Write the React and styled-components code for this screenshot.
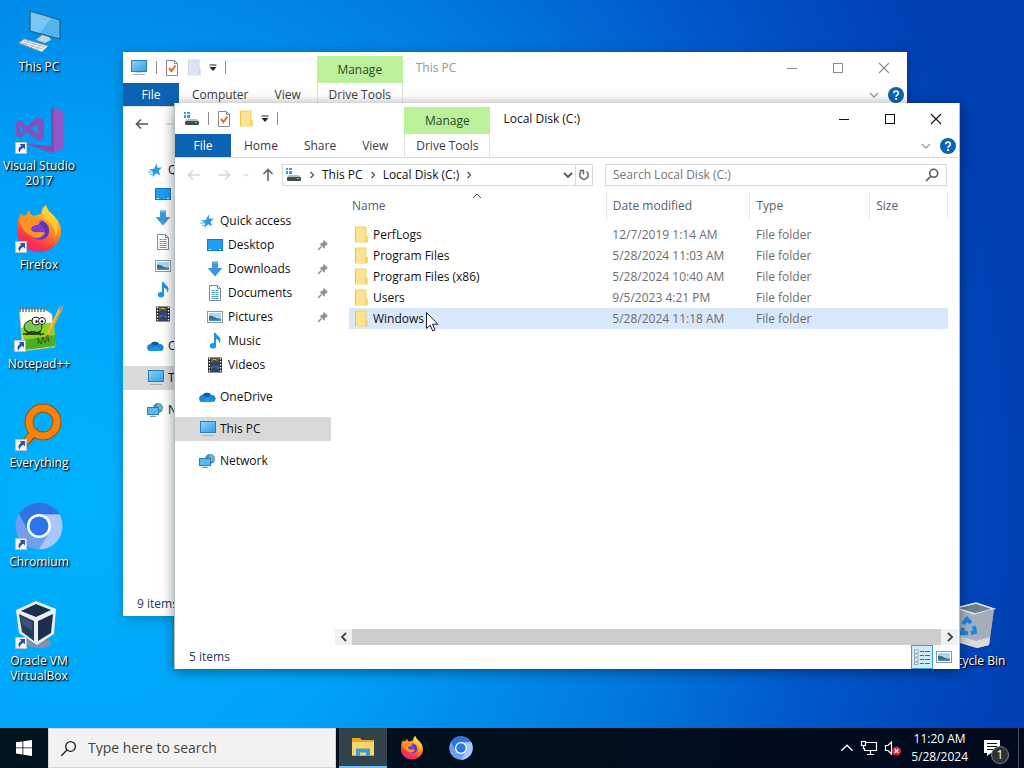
import styled, { createGlobalStyle, css } from "styled-components";

const GlobalStyle = createGlobalStyle`
    * {
        box-sizing: border-box;
    }

    body {
        margin: 0;
        overflow: hidden;
        font-family: "Open Sans", "Noto Sans", "Liberation Sans", sans-serif;
        font-size: 12px;
        line-height: 16px;
    }

    button, input {
        font: inherit;
        color: inherit;
        border: 0;
        padding: 0;
        background: none;
        border-radius: 0;
    }

    svg {
        display: block;
        flex: none;
    }
`;

/* ---------- icons ---------- */

const MonitorIcon = ({ size = 18 }) => (
    <svg width={size} height={size} viewBox="0 0 18 18">
        <defs>
            <linearGradient id="screen" x1="0" y1="0" x2="1" y2="1">
                <stop offset="0" stopColor="#8fd3fb" />
                <stop offset="1" stopColor="#2f9fe8" />
            </linearGradient>
        </defs>
        <rect x="1.5" y="1.5" width="15" height="11" fill="url(#screen)" stroke="#2f7fb5" />
        <path d="M3 15.500h12" stroke="#9fb0ba" strokeWidth="1" />
        <path d="M6 13.500h6" stroke="#cfd8dd" />
    </svg>
);

const DriveIcon = () => (
    <svg width="18" height="16" viewBox="0 0 18 16">
        <path d="M2 1h2v2H2zM5 1h3v2H5zM2 4h2v3H2zM5 4h3v3H5z" fill="#27a5e8" />
        <path d="M5 8h10l2 3H3z" fill="#b6bec1" />
        <rect x="3" y="10" width="14" height="4" rx="1" fill="#3e4f50" />
        <rect x="13" y="11" width="2" height="1" fill="#5ee08a" />
    </svg>
);

const CheckPageIcon = () => (
    <svg width="14" height="16" viewBox="0 0 14 16">
        <path d="M1.500 0.500h8l3 3v12h-11z" fill="#fff" stroke="#8a8a8a" />
        <path d="M9.500 0.500v3h3" fill="none" stroke="#8a8a8a" />
        <path d="M4 8l2.500 3L10.500 5.500" fill="none" stroke="#dd6b3f" strokeWidth="2" />
    </svg>
);

const FolderIcon = ({ faded }) => (
    <svg width="14" height="17" viewBox="0 0 14 17">
        <path d="M1 0.500h11.500v9l1 .5v6.500H1z" fill={faded ? "#d3daf0" : "#f0cf68"} />
        <path d="M2 1.500h9.500V16H2z" fill={faded ? "#dde4f6" : "#fae491"} />
        <path d="M11 10.500h2.500v5.500H11z" fill={faded ? "#cfd6ec" : "#f3d468"} />
        <path d="M1.500 1v15" stroke={faded ? "#cdd5ea" : "#e8c252"} />
    </svg>
);

const DropCaret = () => (
    <svg width="8" height="8" viewBox="0 0 8 8">
        <path d="M0.500 1h7" stroke="#222" strokeWidth="1" />
        <path d="M0.500 3h7L4 7z" fill="#222" />
    </svg>
);

const Chevron = ({ dir = "down", size = 10, color = "#555", weight = 1.3 }) => {
    const paths = {
        down: "M1 3l4 4 4-4",
        up: "M1 7l4-4 4 4",
        right: "M3.500 2l3 3-3 3",
        left: "M7 1L3 5l4 4",
    };
    return (
        <svg width={size} height={size} viewBox="0 0 10 10">
            <path d={paths[dir]} fill="none" stroke={color} strokeWidth={weight} />
        </svg>
    );
};

const Arrow = ({ angle = 0, color = "#555" }) => (
    <svg width="14" height="14" viewBox="0 0 14 14">
        <g transform={`rotate(${angle} 7 7)`} fill="none" stroke={color} strokeWidth="1.600">
            <path d="M1.500 7h11.500M6 2.500L1.500 7 6 11.500" />
        </g>
    </svg>
);

const RefreshIcon = () => (
    <svg width="14" height="14" viewBox="0 0 14 14">
        <path d="M9.500 3.500a4.300 4.300 0 1 1-5 0" fill="none" stroke="#666" strokeWidth="1.500" />
        <path d="M2.500 2.500h4v4" fill="none" stroke="#666" strokeWidth="1.400" />
    </svg>
);

const Magnifier = ({ size = 14, color = "#555", weight = 1.6 }) => (
    <svg width={size} height={size} viewBox="0 0 14 14">
        <circle cx="8.700" cy="5.300" r="4" fill="none" stroke={color} strokeWidth={weight} />
        <path d="M5.800 8.200L1 13" stroke={color} strokeWidth={weight} />
    </svg>
);

const HelpIcon = () => (
    <svg width="16" height="16" viewBox="0 0 16 16">
        <circle cx="8" cy="8" r="8" fill="#0c64b4" />
        <path d="M5.700 6.200a2.300 2.200 0 1 1 3.500 1.900c-.8.500-1.200.8-1.200 1.700" fill="none" stroke="#fff" strokeWidth="1.700" />
        <rect x="7.100" y="11" width="1.900" height="1.900" fill="#fff" />
    </svg>
);

const StarIcon = () => (
    <svg width="16" height="16" viewBox="0 0 16 16">
        <path d="M9.500 1.500l1 4.300 4.500-.3-3.400 3.300 1.600 4.700-4-2.200L5.500 15l.3-4.800L3 7.500l4-.7z" fill="#2a9be6" />
        <path d="M2 7.500h4M1 10h4M3 12.500h2" stroke="#56b2ee" />
    </svg>
);

const DesktopIcon = () => (
    <svg width="16" height="16" viewBox="0 0 16 16">
        <rect x="0.500" y="2.500" width="15" height="11" fill="#1e9df5" stroke="#1579c8" />
        <path d="M2 12.500h2M12 12.500h2" stroke="#d5efff" />
    </svg>
);

const DownloadIcon = () => (
    <svg width="16" height="16" viewBox="0 0 16 16">
        <path d="M5 0.500h6V7h4.500L8 15.500.500 7H5z" fill="#3c97dc" />
        <path d="M5.500 1h5v1.500h-5z" fill="#70b8ea" />
    </svg>
);

const DocumentIcon = () => (
    <svg width="16" height="16" viewBox="0 0 16 16">
        <path d="M2.500 0.500h8l3 3v12h-11z" fill="#fff" stroke="#7e8a92" />
        <path d="M10.500 0.500v3h3" fill="none" stroke="#7e8a92" />
        <path d="M4.500 5.500h3M8.500 5.500h3M4.500 7.500h7M4.500 9.500h3M8.500 9.500h3M4.500 11.500h7M4.500 13.500h7" stroke="#4f9fc4" />
    </svg>
);

const PictureIcon = () => (
    <svg width="16" height="16" viewBox="0 0 16 16">
        <rect x="0.500" y="2.500" width="15" height="11" fill="#fff" stroke="#8a9aa5" />
        <rect x="2" y="4" width="12" height="8" fill="#a8d8f5" />
        <path d="M2 7c3-1 5 1 7 2l5 1v2H2z" fill="#3a6f82" />
        <path d="M2 10.500h12V12H2z" fill="#4b8fc0" />
    </svg>
);

const MusicIcon = () => (
    <svg width="16" height="16" viewBox="0 0 16 16">
        <path d="M7 0h2c.3 2.500 4.500 3.500 4.500 7 0 1.500-.6 2.700-1.500 3.500.5-2.700-1-4-3-4.700V13H7z" fill="#1d96e8" />
        <ellipse cx="6" cy="12.800" rx="3.200" ry="2.700" fill="#1d96e8" />
    </svg>
);

const VideoIcon = () => (
    <svg width="16" height="16" viewBox="0 0 16 16">
        <rect x="1" y="0.500" width="14" height="15" fill="#26272b" />
        <path d="M2.500 1v14M13.500 1v14" stroke="#fff" strokeWidth="1.400" strokeDasharray="1.500 1.500" />
        <rect x="4" y="1.500" width="8" height="6" fill="#7c6a35" />
        <rect x="4" y="8.500" width="8" height="6" fill="#3d5fa8" />
        <path d="M4 6l3-3 3 2 2-2v4.500H4zM4 13l4-3 4 3v1.500H4z" fill="#30416c" />
        <path d="M6 2.500h3" stroke="#d9b04c" />
    </svg>
);

const CloudIcon = () => (
    <svg width="17" height="16" viewBox="0 0 17 16">
        <path d="M4 13a3.700 3.500 0 0 1-.3-7A4.800 4.600 0 0 1 12 6a3.700 3.500 0 0 1 1.500 7z" fill="#1a86d9" />
        <path d="M3.700 6A4.800 4.600 0 0 1 12 6c-1.500 0-2.500 1-3 2z" fill="#0a5cb0" />
        <path d="M2 12l7-4 6 4.300c-.5.500-1 .7-1.500.7H4c-.8 0-1.500-.4-2-1z" fill="#1f95e6" />
    </svg>
);

const NetworkIcon = () => (
    <svg width="17" height="16" viewBox="0 0 17 16">
        <circle cx="11" cy="6" r="5" fill="#3f8fae" />
        <path d="M11 1c2 1 4 3 4.700 6L12 9l-2-5z" fill="#6fb7c9" />
        <rect x="0.500" y="5.500" width="11" height="7" fill="#5ab9f0" stroke="#2b7fae" />
        <path d="M3 14.500h6" stroke="#7c98a8" />
        <path d="M6 13v1" stroke="#7c98a8" />
    </svg>
);

const PinIcon = () => (
    <svg width="12" height="12" viewBox="0 0 12 12">
        <path d="M7 1l4 4-1.200.6L8 7.400 7.600 10 2.500 4.800l2.400-.5L6.500 2.300z" fill="#87929b" />
        <path d="M4.500 7.500L1 11" stroke="#87929b" strokeWidth="1.400" />
    </svg>
);

const DetailsIcon = () => (
    <svg width="16" height="16" viewBox="0 0 16 16">
        <g fill="#fff" stroke="#7d9098" strokeWidth=".8">
            <path d="M0.500 1h3.500v3H0.500zM0.500 5h3.500v3H0.500zM0.500 9h3.500v3H0.500zM0.500 13h3.500v2.500H0.500z" />
        </g>
        <path d="M6 2.500h4M11 2.500h5M6 6.500h4M11 6.500h5M6 10.500h4M11 10.500h5M6 14.500h4M11 14.500h5" stroke="#50666f" />
    </svg>
);

const ThisPcLarge = () => (
    <svg width="48" height="48" viewBox="0 0 48 48">
        <path d="M15 4l30 9v19L15 24z" fill="#54b2ec" stroke="#2c5f86" strokeWidth="1.200" />
        <path d="M16 5.500L36 11 25 26l-9-2.500z" fill="#8bd0f7" opacity=".7" />
        <path d="M27 28l7 2 2 3-6 3-9-3z" fill="#c6d4dc" />
        <path d="M9 32l24 7-6 6-23-9z" fill="#e8ecee" stroke="#97a4ab" />
        <path d="M9 34l20 6M7 36l20 6M14 34l-4 4M20 36l-4 4M26 38l-4 4" stroke="#a9b4ba" strokeWidth=".8" />
    </svg>
);

const VisualStudioLarge = () => (
    <svg width="48" height="48" viewBox="0 0 48 48">
        <path d="M36 1l12 4v38l-12 4-24-9 24 2z" fill="#9058c6" />
        <path d="M36 1l3 1v44l-3 1-24-9 24 2z" fill="#7d4cb4" />
        <path fillRule="evenodd" d="M23 11l6 3v18l-6 3-11-9-7 6-4-3V17l4-3 7 6zM23 18l-7 5 7 5zM5 19v8l4-4z" fill="#8350bc" />
    </svg>
);

const FirefoxLogo = ({ size = 48 }) => (
    <svg width={size} height={size} viewBox="0 0 48 48">
        <defs>
            <linearGradient id="fox" x1=".8" y1="0" x2=".3" y2="1">
                <stop offset="0" stopColor="#ffe13a" />
                <stop offset=".45" stopColor="#ff8a1f" />
                <stop offset=".8" stopColor="#f8334a" />
                <stop offset="1" stopColor="#e2258f" />
            </linearGradient>
        </defs>
        <path d="M4 12c2-4 3-4 4-1l2-1c2 0 2-1 4-5 1 4 2 5 5 6 3-1 5-2 7-2 0-4 2-7 5-9 1 5 4 7 8 11 5 5 7 9 7 15 0 12-10 21-22 21S2 38 2 26c0-5 0-9 2-14z" fill="url(#fox)" />
        <circle cx="24" cy="25" r="10" fill="#7b3fd0" />
        <path d="M4 14c4-4 9-3 12 1 3-1 7-1 10 1-1 4-5 4-8 5-3 2-2 5 1 6 4 1 7-1 11 1-3 5-10 7-15 2C9 27 5 21 4 14z" fill="#ff9426" />
        <path d="M24 17c6-1 10 3 10 9 0 6-5 9-10 8 8-1 8-8 4-12z" fill="#5a34b4" />
        <path d="M31 0c1 5 4 7 8 11 5 6 5 15 1 21 1-9-4-14-9-17-5-4-4-11 0-15z" fill="#ffd43a" opacity=".8" />
    </svg>
);

const NotepadLarge = () => (
    <svg width="50" height="48" viewBox="0 0 50 48">
        <path d="M5 5h25l8 5 3 33-32 4z" fill="#fdfdf6" stroke="#a4aaa4" strokeWidth=".8" />
        <path d="M7 24l33-6 1.500 24-30 4z" fill="#8ed422" />
        <path d="M9 36l32-5 .5 11-32 4z" fill="#4cae22" />
        <path d="M6 4v4M9 4v4M12 4v4M15 4v4M18 4v4M21 4v4M24 4v4M27 4v4M30 4v4" stroke="#555" strokeWidth="1.200" />
        <ellipse cx="19" cy="23" rx="9" ry="7" fill="#79c84e" stroke="#243c16" />
        <path d="M12 31c4-5 9-4 15 0M11 26c4 4 10 5 16 1M9 30h21" fill="none" stroke="#1f3612" strokeWidth="1.600" />
        <circle cx="22" cy="17" r="4" fill="#fff" stroke="#222" />
        <circle cx="28" cy="17" r="3.500" fill="#fff" stroke="#222" />
        <circle cx="22.500" cy="17.500" r="1.200" />
        <circle cx="28" cy="17.500" r="1.200" />
        <path d="M24 40v-6l3 6 2-7 2 6 3-6 1 5" fill="none" stroke="#285e17" />
        <path d="M47 4L34 31" stroke="#e3a52e" strokeWidth="3.400" />
        <path d="M46 3L33.500 30" stroke="#f7d467" strokeWidth="1" />
        <path d="M48.500 1.500L46.500 6" stroke="#8793b4" strokeWidth="3.400" />
        <path d="M34 31l-2 4" stroke="#8f5e28" strokeWidth="2" />
    </svg>
);

const EverythingLarge = () => (
    <svg width="48" height="48" viewBox="0 0 48 48">
        <path d="M19 30L9 41" stroke="#8b5314" strokeWidth="8" />
        <circle cx="28" cy="19" r="14" fill="none" stroke="#8b5314" strokeWidth="9" />
        <path d="M19 29L9 41" stroke="#fb8208" strokeWidth="6" />
        <circle cx="28" cy="19" r="14" fill="none" stroke="#fb8208" strokeWidth="7" />
    </svg>
);

const ChromiumLogo = ({ size = 48 }) => (
    <svg width={size} height={size} viewBox="0 0 48 48">
        <circle cx="24" cy="24" r="23.500" fill="#6f9ff2" />
        <path d="M4 12A23.500 23.500 0 0 1 44.500 12.500H24a12 12 0 0 0-10.400 17z" fill="#2f72e2" />
        <path d="M44.500 12.500A23.500 23.500 0 0 1 24 47.500L34.400 30A12 12 0 0 0 24 12.500z" fill="#a9c8fa" />
        <circle cx="24" cy="24" r="12" fill="#fff" />
        <circle cx="24" cy="24" r="9.500" fill="#2a76ea" />
    </svg>
);

const VirtualBoxLarge = () => (
    <svg width="48" height="48" viewBox="0 0 48 48">
        <path d="M11 41c3-4 22-4 25 0 1 4-5 6-12 6s-13-2-13-6z" fill="#7f93aa" />
        <path d="M21 0l20 8-2 25-17 11L4 32 1 9z" fill="#e9eef3" />
        <path d="M21 3l15 6-15 7L6 10z" fill="#1d2f4d" />
        <path d="M4 13l15 7v20L7 31z" fill="#263b5e" />
        <path d="M23 20l15-7-2 19-13 8z" fill="#1d2f4d" />
        <path d="M6 16l11 5v8L8 24z" fill="#3b5279" />
    </svg>
);

const RecycleLarge = () => (
    <svg width="48" height="48" viewBox="0 0 48 48">
        <path d="M6 7l20-5 18 6-5 36-12 3-17-5z" fill="#b5bfc9" opacity=".9" />
        <path d="M6 7l20-5 18 6-19 5z" fill="#6d7f93" stroke="#e9eef2" strokeWidth="1.400" />
        <path d="M25 13l19-5-5 36-12 3z" fill="#a3aeb9" />
        <path d="M11 35l15 5 14-4-1 8-12 3-17-5z" fill="#dddcd6" />
        <g fill="none" stroke="#1f86e4" strokeWidth="4">
            <path d="M13 23l4-5 4 4M24 25l1 6-4 1M18 32h-6l1-5" />
        </g>
    </svg>
);

const ShortcutArrow = () => (
    <svg width="12" height="12" viewBox="0 0 12 12">
        <rect x="0.500" y="0.500" width="11" height="11" fill="#f6f6f6" stroke="#b5c2cc" />
        <path d="M4.500 2H10v5.500L8.300 5.800C6 7 5 8.500 4.800 10.500 2.500 8.500 3.500 5.500 6.300 3.800z" fill="#2c539b" />
    </svg>
);

const WindowsLogo = () => (
    <svg width="16" height="16" viewBox="0 0 16 16">
        <path d="M0 2.300L6.500 1.400v6.100H0zM7.300 1.300L16 0v7.500H7.300zM0 8.300h6.500v6.200L0 13.600zM7.300 8.300H16V16l-8.700-1.300z" fill="#fff" />
    </svg>
);

const TaskbarFolder = () => (
    <svg width="22" height="20" viewBox="0 0 22 20">
        <path d="M0 1h8l2 2h12v16H0z" fill="#e9a823" />
        <path d="M0 5h22v13H0z" fill="#fbd566" />
        <path d="M4 11.500h14V19h-4v-3.500H8V19H4z" fill="#3b9ad9" />
    </svg>
);

const TrayNetwork = () => (
    <svg width="18" height="16" viewBox="0 0 18 16">
        <g fill="none" stroke="#fff" strokeWidth="1.200">
            <path d="M6 2.500h10.500v8H4.500V8" />
            <rect x="1.500" y="1.500" width="4" height="4" />
            <path d="M3.500 6v3M10.500 11v3M7 14.500h7" />
        </g>
    </svg>
);

const TrayVolume = () => (
    <svg width="18" height="16" viewBox="0 0 18 16">
        <path d="M1.500 5.500H4l3.500-3.500v12L4 10.500H1.500z" fill="none" stroke="#fff" strokeWidth="1.200" />
        <circle cx="12.500" cy="11" r="4.500" fill="#d9263c" />
        <path d="M10.700 9.200l3.600 3.600M14.300 9.200l-3.600 3.600" stroke="#fff" strokeWidth="1.300" />
    </svg>
);

const ActionCenterIcon = () => (
    <svg width="16" height="16" viewBox="0 0 16 16">
        <path d="M0 0h16v13H7l-4 3v-3H0z" fill="#fff" />
        <path d="M3 3.500h10M3 6.500h10M3 9.500h7" stroke="#0b1220" />
    </svg>
);

const WindowGlyph = ({ kind, color }) => (
    <svg width="12" height="12" viewBox="0 0 12 12">
        {kind === "min" && <path d="M1 6.500h10" stroke={color} />}
        {kind === "max" && <rect x="1.500" y="1.500" width="9" height="9" fill="none" stroke={color} />}
        {kind === "close" && <path d="M1 1l10 10M11 1L1 11" stroke={color} strokeWidth="1.100" />}
    </svg>
);

const CursorIcon = () => (
    <svg width="13" height="20" viewBox="0 0 13 20">
        <path d="M0.500 0.500v16l3.700-3.500 2.500 6 2.300-1-2.500-5.800h5.300z" fill="#fff" stroke="#222" />
    </svg>
);

/* ---------- desktop ---------- */

const Screen = styled.main`
    height: 100vh;
    display: grid;
    grid-template-rows: minmax(0, 1fr) 40px;
    background: radial-gradient(ellipse 100% 150% at 8% 65%, #00b2ff 0%, #00a2f8 28%, #007bde 54%, #0057ca 73%, #003fb4 92%);
`;

const DesktopArea = styled.section`
    position: relative;
    display: grid;
    grid-template-columns: 78px 1fr 78px;
    grid-auto-rows: 99px;
    padding-right: 11px;
    overflow: hidden;
`;

const Shortcut = styled.button`
    grid-column: ${({ $column }) => $column};
    grid-row: ${({ $row }) => $row};
    display: flex;
    flex-direction: column;
    align-items: center;
    justify-content: flex-start;
    gap: 4px;
    padding-top: 7px;
    color: #fff;
    line-height: 15px;
    text-shadow: 1px 1px 2px #000, 1px 1px 1px rgba(0, 0, 0, .8);

    .picture {
        position: relative;
    }

    .arrow {
        position: absolute;
        left: 0;
        bottom: 0;
    }
`;

/* ---------- explorer window ---------- */

const Frame = styled.article`
    position: absolute;
    top: ${({ $inset }) => $inset[0]}px;
    right: ${({ $inset }) => $inset[1]}px;
    bottom: ${({ $inset }) => $inset[2]}px;
    left: ${({ $inset }) => $inset[3]}px;
    display: flex;
    flex-direction: column;
    background: #fff;
    color: #111;
    border: solid #b4c0c8;
    border-width: ${({ $active }) => ($active ? "0 1px" : "0")};
    box-shadow: 0 2px 12px rgba(0, 0, 0, ${({ $active }) => ($active ? 0.45 : 0.25)});
`;

const Ribbon = styled.header`
    display: grid;
    grid-template-columns: auto auto 1fr auto;
    grid-template-rows: 31px 23px;
    border-bottom: 1px solid #dadbdc;
`;

const QuickTools = styled.div`
    display: flex;
    align-items: center;
    gap: 8px;
    padding-left: 7px;

    i {
        width: 1px;
        height: 13px;
        background: #8c8c8c;
    }
`;

const Tabs = styled.div`
    grid-row: 2;
    display: flex;
`;

const Tab = styled.button`
    padding: 0 13px;
    color: #3b3b3b;

    ${({ $file }) => $file && css`
        width: 56px;
        color: #fff;
        background: #0c63b2;
    `}
`;

const ToolTab = styled.button`
    width: 86px;
    margin-left: 3px;
    ${({ $title }) => ($title ? css`
        margin-top: 4px;
        background: #bdf09b;
        color: #2d4a1e;
    ` : css`
        border: solid #e2e2e2;
        border-width: 0 1px;
        color: #3b3b3b;
    `)}
`;

const Title = styled.h1`
    margin: 0;
    padding-left: 13px;
    align-self: center;
    font-size: 12px;
    font-weight: 400;
    color: ${({ $active }) => ($active ? "#111" : "#999")};
`;

const Controls = styled.div`
    grid-column: 4;
    display: flex;

    button {
        width: 46px;
        display: grid;
        place-items: center;
    }
`;

const RibbonEnd = styled.div`
    grid-row: 2;
    grid-column: 4;
    display: flex;
    align-items: center;
    justify-content: flex-end;
    gap: 9px;
    padding-right: 3px;
`;

const AddressRow = styled.div`
    display: flex;
    align-items: center;
    padding: 6px 12px;
    gap: 12px;

    .history {
        display: flex;
        align-items: center;
        gap: 16px;
        margin-right: -5px;
    }

    .history button:nth-child(3) {
        margin: 0 -4px;
    }
`;

const AddressBox = styled.div`
    flex: 308;
    height: 22px;
    display: flex;
    align-items: center;
    gap: 5px;
    padding-left: 1px;
    border: 1px solid #d9d9d9;

    .refresh {
        height: 100%;
        padding: 0 1px;
        border-left: 1px solid #d9d9d9;
    }

    .open {
        margin-left: auto;
        margin-right: -3px;
    }
`;

const SearchBox = styled.label`
    flex: 326;
    min-width: 0;
    height: 22px;
    display: flex;
    align-items: center;
    padding: 0 7px;
    border: 1px solid #d9d9d9;

    input {
        flex: 1;
        min-width: 0;
        outline: 0;
    }

    input::placeholder {
        color: #757575;
        opacity: 1;
    }
`;

const Body = styled.div`
    flex: 1;
    min-height: 0;
    display: grid;
    grid-template-columns: 156px minmax(0, 1fr);
    column-gap: 4px;
`;

const NavPane = styled.nav`
    padding-top: 17px;
    display: flex;
    flex-direction: column;
    gap: 8px;

    ul {
        margin: 0;
        padding: 0;
        list-style: none;
    }
`;

const NavRow = styled.button`
    width: 100%;
    height: 24px;
    display: flex;
    align-items: center;
    gap: 5px;
    padding: 0 2px 0 ${({ $nested }) => ($nested ? 32 : 24)}px;
    background: ${({ $selected }) => ($selected ? "#d9d9d9" : "none")};

    .icon {
        width: 16px;
    }

    .pin {
        margin-left: auto;
    }
`;

const Content = styled.section`
    display: flex;
    flex-direction: column;
    justify-content: space-between;
`;

const FileTable = styled.table`
    margin: 0 11px 0 14px;
    table-layout: fixed;
    border-collapse: collapse;

    th {
        position: relative;
        height: 27px;
        padding: 0 0 0 6px;
        font-weight: 400;
        text-align: left;
        color: #56606e;
        border-right: 1px solid #e5e5e5;
    }

    th:first-child {
        padding-left: 3px;
    }

    .sort {
        position: absolute;
        top: -1px;
        left: calc(50% - 5px);
    }

    tbody::before {
        content: "";
        display: block;
        height: 5px;
    }

    td {
        height: 21px;
        padding: 0 0 0 6px;
        color: #6d6d6d;
    }
`;

const FileRow = styled.tr`
    background: ${({ $hover }) => ($hover ? "#d9e8fb" : "none")};

    td:first-child {
        padding-left: 5px;
        color: #111;
    }

    td div {
        display: flex;
        align-items: center;
        gap: 5px;
    }
`;

const ScrollBar = styled.div`
    height: 16px;
    display: flex;
    margin-right: 1px;
    background: #f0f0f0;

    button {
        width: 17px;
        display: grid;
        place-items: center;
    }

    .thumb {
        flex: 1;
        background: #cdcdcd;
    }
`;

const StatusBar = styled.footer`
    height: 24px;
    display: flex;
    align-items: center;
    padding: 0 4px 0 14px;
    color: #1f3a5c;

    span {
        margin-right: auto;
    }
`;

const ViewButton = styled.button`
    width: 22px;
    height: 24px;
    display: grid;
    place-items: center;
    ${({ $on }) => $on && css`
        background: #cdebf8;
        border: 1px solid #3c9fd0;
    `}
`;

const Pointer = styled.div`
    position: absolute;
    left: 426px;
    top: 312px;
    pointer-events: none;
`;

/* ---------- taskbar ---------- */

const Taskbar = styled.footer`
    display: flex;
    color: #fff;
    background: linear-gradient(90deg, #00141e, #000e1c 60%, #020a1e);
`;

const StartButton = styled.button`
    width: 48px;
    display: grid;
    place-items: center;
`;

const TaskSearch = styled.label`
    width: 288px;
    display: flex;
    align-items: center;
    gap: 11px;
    padding-left: 11px;
    margin-right: 3px;
    background: #f2f2f2;
    border: 1px solid #d2d6d8;
    color: #222;
    font-size: 14px;

    input {
        flex: 1;
        min-width: 0;
        outline: 0;
    }

    input::placeholder {
        color: #444;
        opacity: 1;
    }
`;

const TaskButton = styled.button`
    width: 48px;
    margin-right: 1px;
    display: grid;
    place-items: center;
    ${({ $active }) => $active && css`
        background: #33434d;
        border-bottom: 2px solid #76b9ed;
    `}
`;

const Tray = styled.div`
    margin-left: auto;
    display: flex;
    align-items: center;
    gap: 6px;

    .clock {
        padding: 0 5px 0 3px;
        text-align: center;
        line-height: 18px;
    }

    .peek {
        width: 6px;
        height: 100%;
        border-left: 1px solid #4a5260;
    }
`;

const Notifications = styled.button`
    position: relative;
    width: 36px;
    height: 100%;
    padding-left: 5px;
    margin-right: -3px;

    .count {
        position: absolute;
        left: 12px;
        top: 18px;
        width: 18px;
        height: 18px;
        border: 1px solid #7b828a;
        border-radius: 50%;
        background: #2b3138;
        line-height: 16px;
    }
`;

const shortcuts = [
    { name: "This PC", icon: <ThisPcLarge />, plain: true },
    { name: "Visual Studio 2017", icon: <VisualStudioLarge /> },
    { name: "Firefox", icon: <FirefoxLogo /> },
    { name: "Notepad++", icon: <NotepadLarge /> },
    { name: "Everything", icon: <EverythingLarge /> },
    { name: "Chromium", icon: <ChromiumLogo /> },
    { name: "Oracle VM VirtualBox", icon: <VirtualBoxLarge /> },
];

const navGroups = [
    [
        { name: "Quick access", icon: <StarIcon /> },
        { name: "Desktop", icon: <DesktopIcon />, nested: true, pinned: true },
        { name: "Downloads", icon: <DownloadIcon />, nested: true, pinned: true },
        { name: "Documents", icon: <DocumentIcon />, nested: true, pinned: true },
        { name: "Pictures", icon: <PictureIcon />, nested: true, pinned: true },
        { name: "Music", icon: <MusicIcon />, nested: true },
        { name: "Videos", icon: <VideoIcon />, nested: true },
    ],
    [{ name: "OneDrive", icon: <CloudIcon /> }],
    [{ name: "This PC", icon: <MonitorIcon />, selected: true }],
    [{ name: "Network", icon: <NetworkIcon /> }],
];

const files = [
    { name: "PerfLogs", date: "12/7/2019 1:14 AM" },
    { name: "Program Files", date: "5/28/2024 11:03 AM" },
    { name: "Program Files (x86)", date: "5/28/2024 10:40 AM" },
    { name: "Users", date: "9/5/2023 4:21 PM" },
    { name: "Windows", date: "5/28/2024 11:18 AM", hover: true },
];

const FileList = () => (
    <FileTable>
        <colgroup>
            <col style={{ width: "43%" }} />
            <col style={{ width: "24%" }} />
            <col style={{ width: "20%" }} />
            <col />
        </colgroup>
        <thead>
            <tr>
                <th>Name<span className="sort"><Chevron dir="up" weight={1} /></span></th>
                <th>Date modified</th>
                <th>Type</th>
                <th>Size</th>
            </tr>
        </thead>
        <tbody>
            {files.map((file) => (
                <FileRow key={file.name} $hover={file.hover}>
                    <td><div><FolderIcon />{file.name}</div></td>
                    <td>{file.date}</td>
                    <td>File folder</td>
                    <td />
                </FileRow>
            ))}
        </tbody>
    </FileTable>
);

const ExplorerWindow = ({ title, active, inset, tabs, icon, path, items, children }) => {
    const glyph = active ? "#111" : "#8a8a8a";

    return (
        <Frame $inset={inset} $active={active}>
            <Ribbon>
                <QuickTools>
                    {icon}<i /><CheckPageIcon /><FolderIcon faded={!active} /><DropCaret /><i />
                </QuickTools>
                <ToolTab $title>Manage</ToolTab>
                <Title $active={active}>{title}</Title>
                <Controls>
                    <button aria-label="Minimize"><WindowGlyph kind="min" color={glyph} /></button>
                    <button aria-label="Maximize"><WindowGlyph kind="max" color={glyph} /></button>
                    <button aria-label="Close"><WindowGlyph kind="close" color={glyph} /></button>
                </Controls>
                <Tabs>
                    <Tab $file>File</Tab>
                    {tabs.map((tab) => <Tab key={tab}>{tab}</Tab>)}
                </Tabs>
                <ToolTab>Drive Tools</ToolTab>
                <RibbonEnd>
                    <button aria-label="Expand the ribbon"><Chevron color="#999" /></button>
                    <button aria-label="Help"><HelpIcon /></button>
                </RibbonEnd>
            </Ribbon>
            <AddressRow>
                <div className="history">
                    <button aria-label="Back"><Arrow color={active ? "#d5d5d5" : "#555"} /></button>
                    <button aria-label="Forward"><Arrow angle={180} color="#d5d5d5" /></button>
                    <button aria-label="Recent locations"><Chevron size={6} color="#bbb" /></button>
                    <button aria-label="Up"><Arrow angle={90} color="#666" /></button>
                </div>
                <AddressBox>
                    {icon}
                    <Chevron dir="right" />
                    {path.map((part) => [
                        <button key={part}>{part}</button>,
                        <Chevron key={part + "-next"} dir="right" />,
                    ])}
                    <button className="open" aria-label="Previous locations"><Chevron weight={1.8} /></button>
                    <button className="refresh" aria-label="Refresh"><RefreshIcon /></button>
                </AddressBox>
                <SearchBox>
                    <input aria-label={`Search ${title}`} placeholder={`Search ${title}`} />
                    <Magnifier />
                </SearchBox>
            </AddressRow>
            <Body>
                <NavPane>
                    {navGroups.map((group) => (
                        <ul key={group[0].name}>
                            {group.map((item) => (
                                <li key={item.name}>
                                    <NavRow $nested={item.nested} $selected={item.selected}>
                                        <span className="icon">{item.icon}</span>
                                        {item.name}
                                        {item.pinned && <span className="pin"><PinIcon /></span>}
                                    </NavRow>
                                </li>
                            ))}
                        </ul>
                    ))}
                </NavPane>
                <Content>{children}</Content>
            </Body>
            <StatusBar>
                <span>{items} items</span>
                <ViewButton $on={active} aria-label="Details view"><DetailsIcon /></ViewButton>
                <ViewButton aria-label="Large icons view"><PictureIcon /></ViewButton>
            </StatusBar>
        </Frame>
    );
};

const App = () => {
    return (
        <>
            <GlobalStyle />
            <Screen>
                <DesktopArea>
                    {shortcuts.map((item, index) => (
                        <Shortcut key={item.name} $column={1} $row={index + 1}>
                            <span className="picture">
                                {item.icon}
                                {!item.plain && <span className="arrow"><ShortcutArrow /></span>}
                            </span>
                            {item.name}
                        </Shortcut>
                    ))}
                    <Shortcut $column={3} $row={7}>
                        <RecycleLarge />
                        Recycle Bin
                    </Shortcut>

                    <ExplorerWindow
                        title="This PC"
                        inset={[52, 117, 112, 123]}
                        tabs={["Computer", "View"]}
                        icon={<MonitorIcon />}
                        path={["This PC"]}
                        items={9}
                    />
                    <ExplorerWindow
                        active
                        title="Local Disk (C:)"
                        inset={[103, 64, 59, 174]}
                        tabs={["Home", "Share", "View"]}
                        icon={<DriveIcon />}
                        path={["This PC", "Local Disk (C:)"]}
                        items={5}
                    >
                        <FileList />
                        <ScrollBar>
                            <button aria-label="Scroll left"><Chevron dir="left" weight={1.8} color="#444" /></button>
                            <div className="thumb" />
                            <button aria-label="Scroll right"><Chevron dir="right" size={14} weight={1.3} color="#444" /></button>
                        </ScrollBar>
                    </ExplorerWindow>

                    <Pointer><CursorIcon /></Pointer>
                </DesktopArea>

                <Taskbar>
                    <StartButton aria-label="Start"><WindowsLogo /></StartButton>
                    <TaskSearch>
                        <Magnifier size={17} color="#222" weight={1.1} />
                        <input aria-label="Type here to search" placeholder="Type here to search" />
                    </TaskSearch>
                    <TaskButton $active aria-label="File Explorer"><TaskbarFolder /></TaskButton>
                    <TaskButton aria-label="Firefox"><FirefoxLogo size={24} /></TaskButton>
                    <TaskButton aria-label="Chromium"><ChromiumLogo size={24} /></TaskButton>
                    <Tray>
                        <Chevron dir="up" size={14} color="#fff" weight={1} />
                        <TrayNetwork />
                        <TrayVolume />
                        <div className="clock">11:20 AM<br />5/28/2024</div>
                        <Notifications aria-label="Notifications">
                            <ActionCenterIcon />
                            <span className="count">1</span>
                        </Notifications>
                        <span className="peek" />
                    </Tray>
                </Taskbar>
            </Screen>
        </>
    );
};

export default App;
